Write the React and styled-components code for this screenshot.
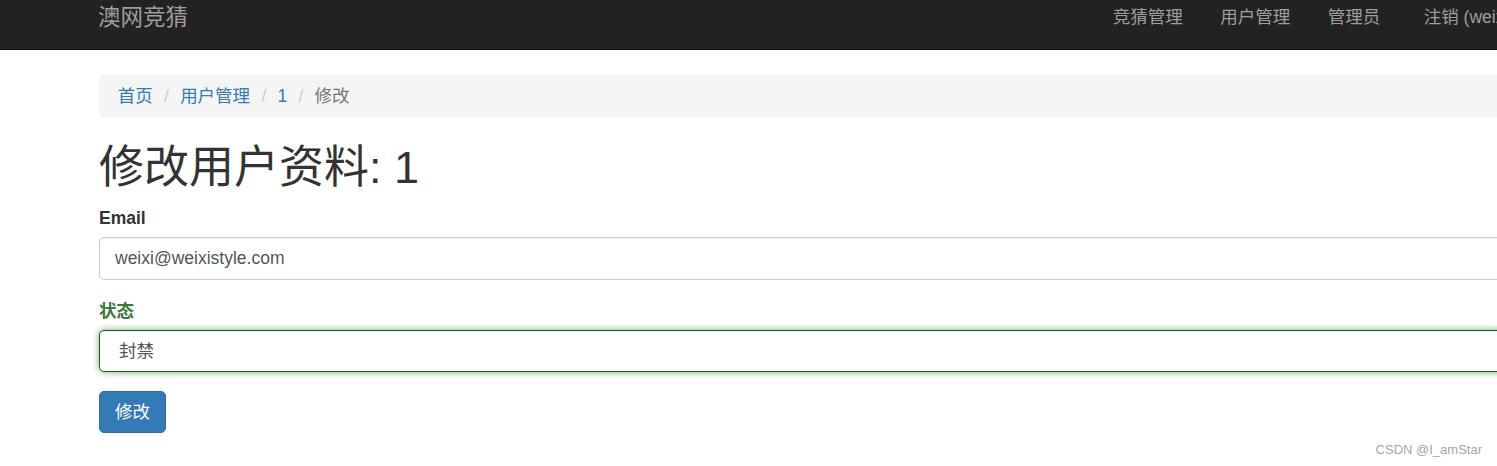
import React from "react";
import styled, { createGlobalStyle } from "styled-components";

const GlobalStyle = createGlobalStyle`
  html, body {
    margin: 0;
    padding: 0;
    background: #fff;
    overflow: hidden;
  }
  body {
    font-family: "Liberation Sans", Arial, "Noto Sans CJK SC", sans-serif;
    font-size: 17.5px;
    line-height: 25px;
    color: #333;
  }
`;

const Page = styled.div`
  position: relative;
  width: 1497px;
  height: 466px;
  overflow: hidden;
`;

const Navbar = styled.nav`
  height: 49px;
  background: #222;
  border-bottom: 1px solid #080808;
`;

const NavInner = styled.div`
  display: flex;
  align-items: flex-start;
  padding: 4.5px 0 0 98px;
  white-space: nowrap;
`;

const Brand = styled.a`
  flex: 0 0 996px;
  font-size: 22.5px;
  line-height: 25px;
  color: #9d9d9d;
  text-decoration: none;
`;

const NavList = styled.ul`
  display: flex;
  margin: 0;
  padding: 0;
  list-style: none;
`;

const NavItem = styled.li`
  margin-left: ${(p) => (p.$gap ? "6px" : "0")};
  a {
    display: block;
    padding: 0 18.75px;
    color: #9d9d9d;
    text-decoration: none;
    line-height: 25px;
  }
`;

const Container = styled.div`
  width: 1500px;
  margin-left: 99px;
`;

const Breadcrumb = styled.ol`
  display: flex;
  margin: 24px 0 25px;
  padding: 9.5px 18.75px;
  list-style: none;
  background: #f5f5f5;
  border-radius: 5px;

  li + li::before {
    content: "/";
    padding: 0 6.25px;
    margin: 0 5px;
    color: #ccc;
  }
`;

const Crumb = styled.li`
  color: ${(p) => (p.$active ? "#777" : "#337ab7")};
`;

const Heading = styled.h1`
  margin: 0 0 13.5px;
  font-size: 45px;
  line-height: 49.5px;
  font-weight: 400;
  color: #333;
`;

const FormGroup = styled.div`
  margin-bottom: 18.75px;
`;

const Label = styled.label`
  display: block;
  margin-bottom: 6.25px;
  font-weight: bold;
  color: ${(p) => (p.$success ? "#3c763d" : "#333")};
`;

const Input = styled.input`
  display: block;
  box-sizing: border-box;
  width: 100%;
  height: 42.5px;
  padding: 7.5px 15px;
  font: inherit;
  color: #555;
  background: #fff;
  border: 1px solid #ccc;
  border-radius: 5px;
  box-shadow: inset 0 1px 1px rgba(0, 0, 0, 0.075);
  outline: none;
`;

const Select = styled.select`
  display: block;
  box-sizing: border-box;
  width: 100%;
  height: 42.5px;
  padding: 7.5px 15px 7.5px 19px;
  font: inherit;
  color: #555;
  background: #fff;
  border: 1px solid #2b542c;
  border-radius: 5px;
  box-shadow: inset 0 1px 1px rgba(0, 0, 0, 0.075), 0 0 7.5px #67b168;
  outline: none;
  appearance: none;
`;

const Button = styled.button`
  display: inline-block;
  padding: 7.5px 15px;
  font: inherit;
  line-height: 25px;
  color: #fff;
  background: #337ab7;
  border: 1px solid #2e6da4;
  border-radius: 5px;
  cursor: pointer;
`;

const Watermark = styled.div`
  position: absolute;
  right: 15px;
  bottom: 8px;
  font-size: 13px;
  line-height: 16px;
  color: #a6a6a6;
`;

export default function App() {
  return (
    <Page>
      <GlobalStyle />
      <Navbar>
        <NavInner>
          <Brand href="#">澳网竞猜</Brand>
          <NavList>
            <NavItem><a href="#">竞猜管理</a></NavItem>
            <NavItem><a href="#">用户管理</a></NavItem>
            <NavItem><a href="#">管理员</a></NavItem>
            <NavItem $gap><a href="#">注销 (weixi@weixistyle.com)</a></NavItem>
          </NavList>
        </NavInner>
      </Navbar>
      <Container>
        <Breadcrumb>
          <Crumb>首页</Crumb>
          <Crumb>用户管理</Crumb>
          <Crumb>1</Crumb>
          <Crumb $active>修改</Crumb>
        </Breadcrumb>
        <Heading>修改用户资料: 1</Heading>
        <form onSubmit={(e) => e.preventDefault()}>
          <FormGroup>
            <Label>Email</Label>
            <Input defaultValue="weixi@weixistyle.com" />
          </FormGroup>
          <FormGroup>
            <Label $success>状态</Label>
            <Select defaultValue="1">
              <option value="0">正常</option>
              <option value="1">封禁</option>
            </Select>
          </FormGroup>
          <Button type="submit">修改</Button>
        </form>
      </Container>
      <Watermark>CSDN @I_amStar</Watermark>
    </Page>
  );
}
